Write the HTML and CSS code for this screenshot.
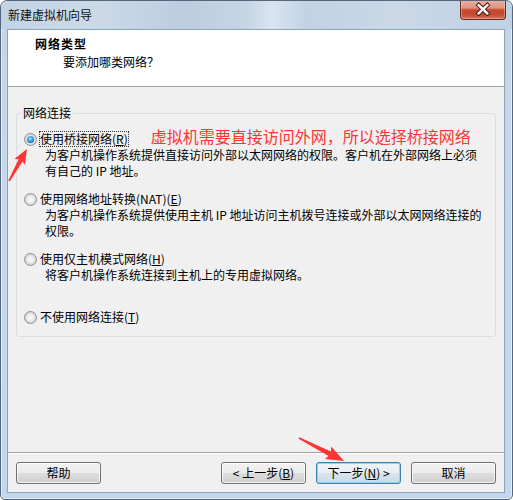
FILE: index.html
```html
<!DOCTYPE html>
<html lang="zh-CN">
<head>
<meta charset="utf-8">
<title>新建虚拟机向导</title>
<link rel="stylesheet" href="styles.css">
</head>
<body>
<div class="window">
  <div class="titlebar">
    <span class="title">新建虚拟机向导</span>
    <div class="close">
      <svg width="46" height="19" viewBox="0 0 46 19">
        <path d="M18.5 5 L27.5 13.5 M27.5 5 L18.5 13.5" stroke="#4a1a14" stroke-width="4.6" stroke-linecap="square" fill="none"/>
        <path d="M18.5 5 L27.5 13.5 M27.5 5 L18.5 13.5" stroke="#ffffff" stroke-width="2.6" stroke-linecap="square" fill="none"/>
      </svg>
    </div>
  </div>
  <div class="frame">
    <div class="client">
      <div class="header">
        <div class="h-title">网络类型</div>
        <div class="h-sub">要添加哪类网络？</div>
      </div>
      <div class="body">
        <fieldset class="group">
          <legend>网络连接</legend>
          <div class="option gap-12">
            <div class="opt-head">
              <span class="radio checked"></span>
              <span class="label focus">使用桥接网络(<u>R</u>)</span>
              <span class="note">虚拟机需要直接访问外网，所以选择桥接网络</span>
            </div>
            <div class="desc">为客户机操作系统提供直接访问外部以太网网络的权限。客户机在外部网络上必须<br>有自己的 IP 地址。</div>
          </div>
          <div class="option gap-12">
            <div class="opt-head">
              <span class="radio"></span>
              <span class="label">使用网络地址转换(NAT)(<u>E</u>)</span>
            </div>
            <div class="desc">为客户机操作系统提供使用主机 IP 地址访问主机拨号连接或外部以太网网络连接的<br>权限。</div>
          </div>
          <div class="option gap-26">
            <div class="opt-head">
              <span class="radio"></span>
              <span class="label">使用仅主机模式网络(<u>H</u>)</span>
            </div>
            <div class="desc">将客户机操作系统连接到主机上的专用虚拟网络。</div>
          </div>
          <div class="option">
            <div class="opt-head">
              <span class="radio"></span>
              <span class="label">不使用网络连接(<u>T</u>)</span>
            </div>
          </div>
        </fieldset>
      </div>
      <div class="footer">
        <button class="btn">帮助</button>
        <div class="nav">
          <button class="btn">&lt; 上一步(<u>B</u>)</button>
          <button class="btn default">下一步(<u>N</u>) &gt;</button>
          <button class="btn">取消</button>
        </div>
      </div>
    </div>
  </div>
  <svg class="annot" width="513" height="500" viewBox="0 0 513 500">
    <polygon fill="#ff3434" points="9.7,181.4 22.6,161.4 24.9,165.0 27,149 14.4,159.1 18.7,159.3 8.3,180.6"/>
    <polygon fill="#ff3434" points="298.6,438.7 328.6,456.0 324.8,459.1 344,461 331.2,446.6 330.9,451.5 299.4,437.3"/>
  </svg>
</div>
</body>
</html>
```

FILE: styles.css
```css
* { box-sizing: border-box; }

html, body {
  margin: 0;
  padding: 0;
  background: #ffffff;
}

body {
  font-family: "Noto Sans CJK SC", "Liberation Sans", sans-serif;
  font-size: 12px;
  color: #000;
}

.window {
  position: relative;
  width: 513px;
  height: 500px;
  border: 1px solid #54677c;
  border-radius: 7px 7px 5px 5px;
  background: linear-gradient(180deg, #c4d5e7 0%, #c6d8ec 40%, #c2d7ee 100%);
  box-shadow: inset 0 0 0 1px rgba(255, 255, 255, 0.55);
  display: flex;
  flex-direction: column;
  overflow: hidden;
}

.titlebar {
  height: 28px;
  flex: none;
  display: flex;
  justify-content: space-between;
  align-items: flex-start;
  background: linear-gradient(90deg, #c3d3e4 0%, #ccdae8 18%, #bccde0 36%, #c6d5e4 48%, #d8e5f1 53%, #c2d2e3 60%, #cad8e7 78%, #bfd1e4 100%);
  border-radius: 6px 6px 0 0;
}

.title {
  padding: 6px 0 0 7px;
  line-height: 16px;
  font-size: 12px;
  color: #101010;
}

.close {
  width: 46px;
  height: 20px;
  margin: -1px 6px 0 0;
  border: 1px solid #6a2a22;
  border-top: none;
  border-radius: 0 0 4px 4px;
  background: linear-gradient(180deg, #eab0a2 0%, #df9482 42%, #c9472f 52%, #c54a33 78%, #d8755f 100%);
  box-shadow: inset 0 0 0 1px rgba(255, 230, 220, 0.35);
  display: flex;
  align-items: center;
  justify-content: center;
}

.close svg { display: block; }

.frame {
  flex: 1;
  display: flex;
  padding: 0 7px 6px 6px;
}

.client {
  flex: 1;
  display: flex;
  flex-direction: column;
  background: #f0f0f0;
  border: 1px solid #8ea3b9;
}

.header {
  height: 57px;
  flex: none;
  background: #ffffff;
  border-bottom: 1px solid #a0a0a0;
  padding: 6px 0 0 27px;
}

.h-title {
  font-weight: bold;
  line-height: 16px;
  letter-spacing: 1px;
}

.h-sub {
  margin: 2px 0 0 28px;
  line-height: 16px;
}

.body {
  flex: 1;
  padding-top: 18px;
}

.group {
  margin: 0 8px;
  padding: 10px 7px 11px;
  border: 1px solid #d5dfe5;
  border-radius: 3px;
  min-width: 0;
}

.group legend {
  padding: 0 2px;
  margin-left: -3px;
  line-height: 16px;
  font-size: 12px;
}

.option.gap-12 { margin-bottom: 12px; }
.option.gap-26 { margin-bottom: 26px; }

.opt-head {
  display: flex;
  align-items: center;
  height: 16px;
}

.radio {
  width: 13px;
  height: 13px;
  flex: none;
  margin-right: 2px;
  border-radius: 50%;
  border: 1px solid #8d8f91;
  background: radial-gradient(circle at 50% 50%, #f6f6f6 0, #f2f2f2 30%, #d2d2d2 75%, #e4e4e4 100%);
  display: flex;
  align-items: center;
  justify-content: center;
}

.radio.checked::after {
  content: "";
  width: 7px;
  height: 7px;
  border-radius: 50%;
  background: radial-gradient(circle at 45% 38%, #b8ecff 0, #49aef0 35%, #1a6cc0 70%, #0c3f7e 100%);
}

.label {
  border: 1px dotted transparent;
  line-height: 14px;
  white-space: nowrap;
}

.label.focus { border-color: #303030; }

.note {
  margin: 0 0 6px 22px;
  font-size: 16px;
  line-height: 16px;
  color: #ff3434;
  white-space: nowrap;
}

.desc {
  padding-left: 21px;
  line-height: 16px;
  white-space: nowrap;
}

.footer {
  flex: none;
  display: flex;
  justify-content: space-between;
  border-top: 1px solid #a0a0a0;
  box-shadow: inset 0 1px 0 #ffffff;
  padding: 9px 8px 8px;
}

.nav {
  display: flex;
  gap: 10px;
}

.btn {
  width: 85px;
  height: 22px;
  padding: 0;
  font-family: inherit;
  font-size: 12px;
  line-height: 18px;
  color: #000;
  border: 1px solid #707070;
  border-radius: 3px;
  background: linear-gradient(180deg, #f2f2f2 0%, #ebebeb 50%, #dddddd 50%, #cfcfcf 100%);
  box-shadow: inset 0 0 0 1px rgba(255, 255, 255, 0.75);
}

.btn.default {
  border-color: #3c7fb1;
  background: linear-gradient(180deg, #eef5f9 0%, #e6eff5 50%, #d7e4ec 50%, #cbdbe6 100%);
  box-shadow: inset 0 0 0 1px #8fd3f5;
}

.annot {
  position: absolute;
  left: -1px;
  top: -1px;
  pointer-events: none;
}
```
